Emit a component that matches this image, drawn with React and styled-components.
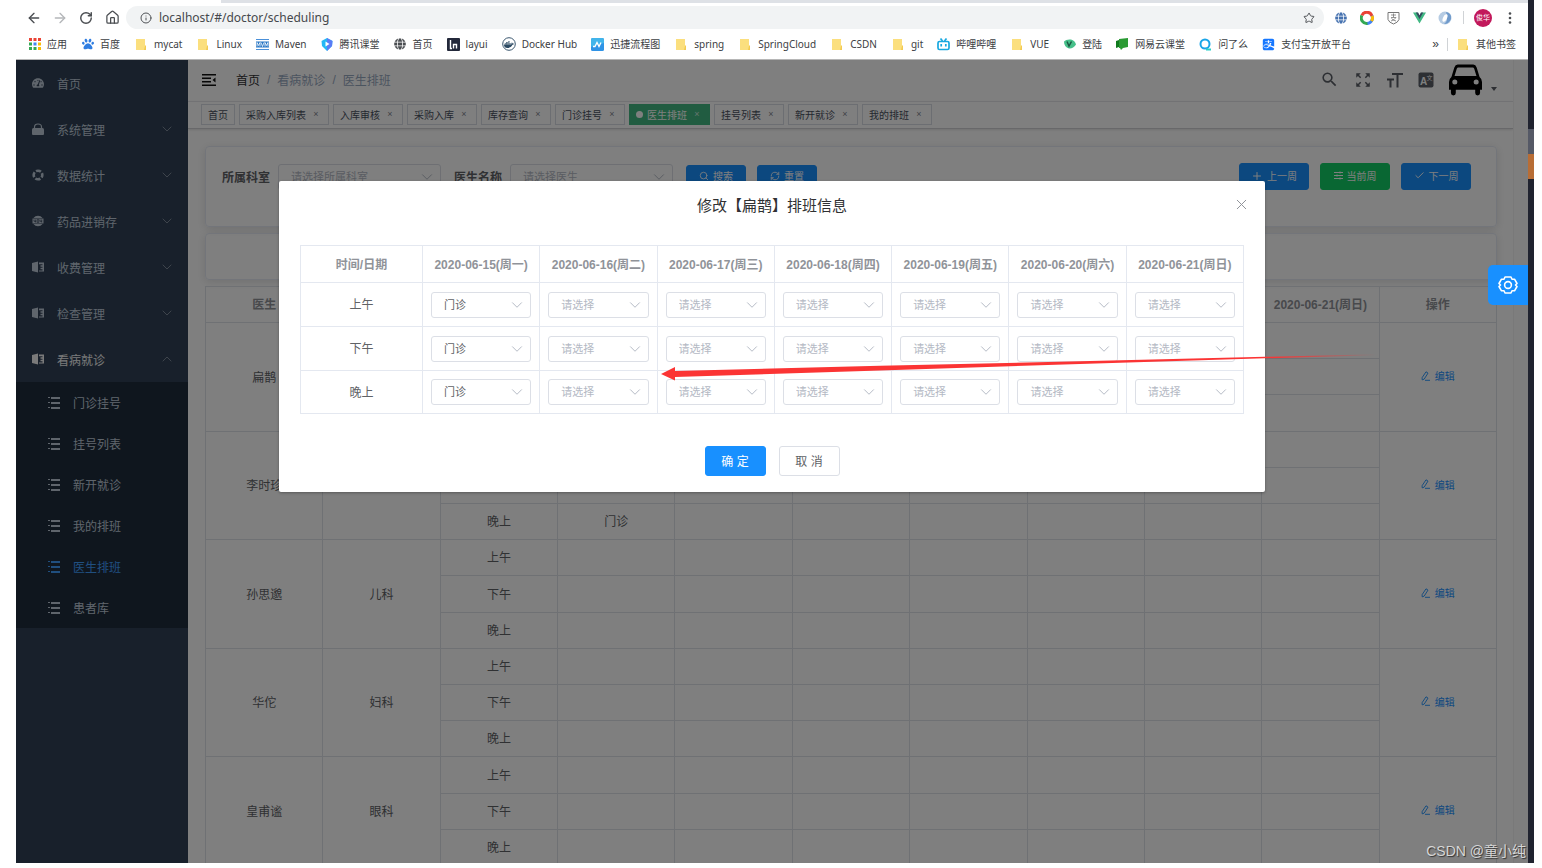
import React from 'react';
import styled, { createGlobalStyle } from 'styled-components';
import {
	FaLock,
	FaTachometerAlt,
	FaPaw,
	FaDocker,
	FaAlipay,
	FaGlobe,
} from 'react-icons/fa';
import { MdSearch, MdZoomOutMap } from 'react-icons/md';
import {
	ArrowLeft,
	ArrowRight,
	Check,
	ChevronDown,
	ChevronUp,
	House,
	Info,
	Plus,
	RefreshCw,
	RotateCw,
	Search,
	Star,
	X,
} from 'lucide-react';

const GlobalStyle = createGlobalStyle`
	* {
		box-sizing: border-box;
	}
	body {
		margin: 0;
		background: #fff;
		font-family: 'Liberation Sans', 'Noto Sans CJK SC', sans-serif;
		font-size: 12px;
	}
	button, select, input {
		font-family: inherit;
	}
	svg {
		display: block;
		flex: none;
	}
`;

const Page = styled.div`
	display: flex;
	height: 100vh;
	padding: 0 8px 5px 16px;
	overflow: hidden;
`;

const Browser = styled.div`
	position: relative;
	display: flex;
	flex: 1;
	flex-direction: column;
	min-width: 0;
`;

const Edge = styled.div`
	display: flex;
	flex-direction: column;
	width: 6px;
	padding-top: 129px;
	background: #20232f;
`;

const EdgeBlock = styled.div`
	height: 25px;
	background: ${props => props.color};
`;

/* ---------- browser bars ---------- */

const TabStrip = styled.div`
	height: 3px;
	background: #dee1e6;
`;

const ActiveTab = styled.div`
	width: 205px;
	height: 3px;
	background: #fff;
`;

const AddressRow = styled.div`
	display: flex;
	align-items: center;
	height: 29px;
	padding: 0 5px;
	color: #4f5256;
`;

const NavButton = styled.button`
	display: flex;
	justify-content: center;
	width: 26px;
	padding: 0;
	border: 0;
	background: none;
	color: ${props => (props.$dim ? '#b4b6b9' : '#4a4d51')};
`;

const AddressBar = styled.label`
	display: flex;
	flex: 1;
	align-items: center;
	gap: 7px;
	height: 23px;
	margin: 0 4px 0 1px;
	padding: 0 9px 0 14px;
	border-radius: 12px;
	background: #f1f3f4;
`;

const AddressInput = styled.input`
	flex: 1;
	padding: 0;
	border: 0;
	outline: 0;
	background: none;
	color: #45484c;
	font-family: 'Noto Sans', sans-serif;
	font-size: 12px;
`;

const Extension = styled.div`
	display: flex;
	justify-content: center;
	width: 26px;
`;

const BarDivider = styled.div`
	width: 1px;
	height: 13px;
	margin: 0 5px;
	background: #d0d3d6;
`;

const Avatar = styled.div`
	width: 18px;
	height: 18px;
	margin: 0 5px;
	border-radius: 50%;
	background: #c2185b;
	color: #fff;
	font-size: 7px;
	line-height: 18px;
	text-align: center;
`;

const Bookmarks = styled.nav`
	display: flex;
	align-items: center;
	gap: 14px;
	height: 28px;
	padding: 0 12px 3px;
	border-bottom: 1px solid #b6b6b6;
`;

const Bookmark = styled.a`
	display: flex;
	align-items: center;
	gap: 6px;
	color: #3c4043;
	font-family: 'Noto Sans', 'Noto Sans CJK SC', sans-serif;
	font-size: 10px;
	line-height: 14px;
	text-decoration: none;
	white-space: nowrap;
`;

const IconSlot = styled.span`
	display: flex;
	justify-content: center;
	min-width: 13px;
`;

const BookmarkEnd = styled.div`
	display: flex;
	align-items: center;
	gap: 3px;
	margin-left: auto;
	color: #3c4043;
`;

/* ---------- admin shell ---------- */

const Shell = styled.div`
	display: flex;
	flex: 1;
	min-height: 0;
	overflow: hidden;
`;

const Sidebar = styled.aside`
	width: 172px;
	background: #304156;
`;

const MenuItem = styled.a`
	display: flex;
	align-items: center;
	gap: 13px;
	height: 46px;
	padding: 0 13px 0 16px;
	color: ${props => (props.$open ? '#f4f4f5' : '#bfcbd9')};
	font-size: 12px;
	text-decoration: none;

	span {
		flex: 1;
	}
`;

const Chevron = styled.i`
	color: #8a94a2;
`;

const SubMenu = styled.div`
	background: #1f2d3d;
`;

const SubItem = styled.a`
	display: flex;
	align-items: center;
	gap: 13px;
	height: 41px;
	padding-left: 32px;
	color: ${props => (props.$active ? '#409eff' : '#bfcbd9')};
	font-size: 12px;
	text-decoration: none;
`;

const Main = styled.main`
	flex: 1;
	min-width: 0;
	background: #fff;
`;

const Gutter = styled.div`
	width: 15px;
	border-left: 1px solid #f2f2f2;
	background: #fcfcfc;
`;

const Navbar = styled.header`
	display: flex;
	align-items: center;
	height: 41px;
	padding: 0 16px 2px 14px;
	color: #5a5e66;
`;

const Breadcrumb = styled.div`
	display: flex;
	align-items: center;
	gap: 7px;
	margin-left: 20px;
	color: #97a8be;
	font-size: 12px;

	a {
		color: #303133;
		text-decoration: none;
	}
`;

const NavIcons = styled.div`
	display: flex;
	align-items: center;
	gap: 15px;
	margin-left: auto;
`;

const CarMenu = styled.div`
	display: flex;
	align-items: flex-end;
	gap: 9px;
	color: #000;
`;

const Caret = styled.i`
	margin-bottom: 5px;
	border: 3px solid transparent;
	border-top: 4px solid #5a5e66;
	border-bottom: 0;
`;

const Tags = styled.div`
	display: flex;
	align-items: center;
	gap: 4px;
	height: 28px;
	padding: 0 13px 1px;
	border-top: 1px solid #e4e4e8;
	border-bottom: 1px solid #d0d0d4;
	box-shadow: 0 1px 2px rgba(0, 0, 0, 0.12);
`;

const Tag = styled.a`
	display: flex;
	align-items: center;
	gap: 4px;
	height: 21px;
	padding: 0 6px 1px;
	border: 1px solid ${props => (props.$active ? '#42b983' : '#d8dce5')};
	background: ${props => (props.$active ? '#42b983' : '#fff')};
	color: ${props => (props.$active ? '#fff' : '#495060')};
	font-size: 10px;
	text-decoration: none;
	white-space: nowrap;
`;

const Dot = styled.i`
	width: 7px;
	height: 7px;
	border-radius: 50%;
	background: #fff;
`;

const TagClose = styled.i`
	width: 12px;
	font-size: 9px;
	font-style: normal;
	text-align: center;
	opacity: 0.7;
`;

const Content = styled.div`
	display: flex;
	flex-direction: column;
	gap: 6px;
	padding: 17px 16px 0 17px;
`;

const Card = styled.section`
	height: ${props => props.$height}px;
	border: 1px solid #e6ebf5;
	border-radius: 4px;
	box-shadow: 0 2px 10px rgba(0, 0, 0, 0.12);
`;

const FilterRow = styled.form`
	display: flex;
	align-items: center;
	height: 27px;
	margin: 16px 25px 0 16px;
`;

const Field = styled.label`
	display: flex;
	align-items: center;
	gap: 8px;
	margin-right: 13px;
	color: #606266;
	font-size: 12px;
	font-weight: bold;
`;

const SelectBox = styled.span`
	position: relative;
	display: block;
	width: ${props => props.$width};

	svg {
		position: absolute;
		top: 4px;
		right: 5px;
		color: #b4b9c4;
		pointer-events: none;
	}
`;

const NativeSelect = styled.select`
	display: block;
	width: 100%;
	height: 26px;
	padding: 0 12px;
	border: 1px solid #dcdfe6;
	border-radius: 3px;
	appearance: none;
	background: #fff;
	color: ${props => (props.$empty ? '#b4b9c4' : '#606266')};
	font-size: 11px;
`;

const Button = styled.button`
	display: flex;
	align-items: center;
	justify-content: center;
	gap: 4px;
	width: ${props => props.$width}px;
	height: ${props => props.$height}px;
	padding: 0 0 2px;
	border: 1px solid ${props => props.$border || props.$color};
	border-radius: 3px;
	background: ${props => props.$color};
	color: ${props => props.$text || '#fff'};
	font-size: ${props => props.$size || 10}px;
	white-space: pre;
`;

const SearchButtons = styled.div`
	display: flex;
	gap: 11px;
`;

const WeekButtons = styled.div`
	display: flex;
	gap: 11px;
	margin-left: auto;
`;

const Grid = styled.table`
	width: 100%;
	border-collapse: collapse;
	table-layout: fixed;
	color: #606266;
	font-size: 12px;
	text-align: center;

	th,
	td {
		padding: 0 0 2px;
		border: 1px solid #dfe2e8;
	}
	th {
		height: 36px;
		color: #909399;
		white-space: nowrap;
	}
	td {
		height: 36px;
	}
	tbody tr:nth-child(5n + 3) td {
		height: 37px;
	}
`;

const EditButton = styled.button`
	display: inline-flex;
	align-items: center;
	gap: 5px;
	padding: 0;
	border: 0;
	background: none;
	color: #1890ff;
	font-size: 10px;
`;

/* ---------- dialog ---------- */

const Mask = styled.div`
	position: absolute;
	inset: 60px 0 0;
	background: rgba(0, 0, 0, 0.5);
`;

const Dialog = styled.div`
	position: relative;
	margin: 121px 263px 0;
	padding-bottom: 16px;
	border-radius: 2px;
	background: #fff;
	box-shadow: 0 1px 3px rgba(0, 0, 0, 0.3);
`;

const DialogHead = styled.div`
	display: grid;
	grid-template-columns: 1fr auto 1fr;
	align-items: start;
	height: 64px;
	padding: 15px 15px 0;
`;

const DialogTitle = styled.h2`
	grid-column: 2;
	margin: 0;
	color: #303133;
	font-size: 15px;
	font-weight: normal;
	line-height: 20px;
`;

const CloseButton = styled.button`
	justify-self: end;
	padding: 0;
	border: 0;
	background: none;
	color: #909399;
`;

const DialogBody = styled.div`
	padding: 0 21px;
`;

const ShiftTable = styled.table`
	width: 100%;
	border-collapse: collapse;
	table-layout: fixed;
	color: #606266;
	font-size: 12px;
	text-align: center;

	th,
	td {
		height: 44px;
		padding: 0 8px;
		border: 1px solid #e4e8f0;
	}
	th {
		height: 37px;
		padding: 0 0 2px;
		color: #909399;
		white-space: nowrap;
	}
	td:first-child {
		padding-bottom: 2px;
	}
	tr:last-child td {
		height: 43px;
	}
	th:first-child {
		width: 122px;
	}
`;

const DialogFoot = styled.div`
	display: flex;
	justify-content: center;
	gap: 13px;
	margin-top: 32px;
`;

const Arrow = styled.svg`
	position: absolute;
	top: 170px;
	left: 382px;
	pointer-events: none;
`;

const SettingsButton = styled.button`
	position: absolute;
	top: 265px;
	right: 0;
	display: flex;
	align-items: center;
	justify-content: center;
	width: 40px;
	height: 40px;
	padding: 0;
	border: 0;
	border-radius: 5px 0 0 5px;
	background: #1890ff;
	color: #fff;
`;

const Watermark = styled.div`
	position: absolute;
	right: 2px;
	bottom: 2px;
	color: #d6d6d6;
	font-size: 14px;
	line-height: 20px;
	text-shadow: 1px 1px 1px #333;
`;

/* ---------- icons ---------- */

const FolderIcon = () => (
	<svg width="14" height="13" viewBox="0 0 14 13">
		<path d="M2 1h9v11H2z" fill="#fbdf7e" />
		<path d="M11 8l1-1v5h-2z" fill="#f3cb52" />
	</svg>
);

const AppsIcon = () => (
	<svg width="12" height="12" viewBox="0 0 12 12">
		{['#ea4335', '#ea4335', '#ea4335', '#34a853', '#4285f4', '#fbbc05', '#34a853', '#34a853', '#fbbc05'].map(
			(color, i) => (
				<rect
					key={i}
					x={(i % 3) * 4.5}
					y={Math.floor(i / 3) * 4.5}
					width="3"
					height="3"
					fill={color}
				/>
			)
		)}
	</svg>
);

const MavenIcon = () => (
	<svg width="13" height="13" viewBox="0 0 13 13">
		<path d="M0 1h13v1H0zM0 11h13v1H0z" fill="#4a90d9" />
		<path d="M0 3.500h13v6H0z" fill="#2b78c5" />
		<path d="M1 8.500v-4l1.500 3 1.500-3v4M5 4.500l1.500 4 1.500-4M9 8.500v-4l1.500 3 1.500-3v4" fill="none" stroke="#fff" strokeWidth=".8" />
	</svg>
);

const ClassIcon = () => (
	<svg width="12" height="13" viewBox="0 0 12 13">
		<path d="M6 0l5.500 3-.5 5-5 5-5-5L.5 3z" fill="#23b8f5" />
		<path d="M6 0l5.500 3-.5 5-5 5z" fill="#5a7cf5" />
		<path d="M4.500 3.500l4 2.500-4 2.500z" fill="#fff" />
	</svg>
);

const LayuiIcon = () => (
	<svg width="13" height="13" viewBox="0 0 13 13">
		<rect width="13" height="13" rx="1" fill="#23283a" />
		<path d="M3.500 2v8.500h1.500M6.500 10.500v-4h3v4" fill="none" stroke="#fff" strokeWidth="1.400" />
	</svg>
);

const DockerIcon = () => (
	<svg width="14" height="14" viewBox="0 0 14 14">
		<circle cx="7" cy="7" r="6.300" fill="#fff" stroke="#3a566e" />
		<g transform="translate(2 2.500)">
			<FaDocker size={10} color="#2c4a63" />
		</g>
	</svg>
);

const FlowIcon = () => (
	<svg width="13" height="13" viewBox="0 0 13 13">
		<rect width="13" height="13" rx="1.500" fill="#2f93e6" />
		<path d="M0 1.500A1.500 1.500 0 0 1 1.500 0h10A1.500 1.500 0 0 1 13 1.500V5L0 9z" fill="#41b4ea" />
		<path d="M2 8.500h2l2-4 2 4 2-4" fill="none" stroke="#fff" strokeWidth="1.300" />
	</svg>
);

const BiliIcon = () => (
	<svg width="13" height="13" viewBox="0 0 13 13" fill="none" stroke="#18a8e0" strokeWidth="1.700">
		<rect x="1" y="3.500" width="11" height="8" rx="1.500" />
		<path d="M3.500 .5l2 2.500M9.500 .5l-2 2.500M4.200 6v2.500M8.800 6v2.500" />
	</svg>
);

const LoginIcon = () => (
	<svg width="12" height="12" viewBox="0 0 12 12">
		<path d="M0 3.500Q2 1 7 1.500q4 1 5 5Q9 11 5 10.500 0 9 0 3.500z" fill="#46c08a" />
		<path d="M3 3.500l2 4.500 2.500-4.500" fill="none" stroke="#1d5a44" strokeWidth="1.500" />
	</svg>
);

const NetEaseIcon = () => (
	<svg width="13" height="12" viewBox="0 0 13 12">
		<path d="M3 1l9-1v9l-5 1-2 2-1-2H3z" fill="#2a9a33" />
		<path d="M0 3l3-1v7l-3 1z" fill="#107a1d" />
	</svg>
);

const AskIcon = () => (
	<svg width="13" height="13" viewBox="0 0 13 13" fill="none" strokeWidth="2">
		<circle cx="6" cy="6" r="4.500" stroke="#19a5e8" />
		<path d="M7 11.500h5" stroke="#28d0c8" />
	</svg>
);

const ChromeRing = () => (
	<svg width="14" height="14" viewBox="0 0 14 14" fill="none" strokeWidth="3">
		<path d="M1.900 4.500A5.400 5.400 0 0 1 12 5" stroke="#ea4335" />
		<path d="M12 4.800A5.400 5.400 0 0 1 7 12.400" stroke="#4285f4" />
		<path d="M12.100 5A5.400 5.400 0 0 1 11.500 10" stroke="#fbbc05" />
		<path d="M7.500 12.400A5.400 5.400 0 0 1 1.900 4.500" stroke="#34a853" />
	</svg>
);

const ShieldIcon = () => (
	<svg width="13" height="14" viewBox="0 0 13 14" fill="none" stroke="#777">
		<path d="M1 1.500h11v7q-1 3-5.500 4.500Q2 11.500 1 8.500z" />
		<path d="M4 4h5M6.500 2.500V6M4 6.500h5Q7.500 9 4 10M4.500 7.500q2 2 4.500 2.500" strokeWidth=".8" />
	</svg>
);

const VueIcon = () => (
	<svg width="13" height="12" viewBox="0 0 14 12">
		<path d="M0 0h5l2 4 2-4h5L7 12z" fill="#41b883" />
		<path d="M3 0h2.500L7 3l1.500-3H11L7 7z" fill="#35495e" />
	</svg>
);

const SwirlIcon = () => (
	<svg width="14" height="14" viewBox="0 0 14 14">
		<circle cx="7" cy="7" r="6.500" fill="#b5cbe3" />
		<path d="M8 1q6 1 5 7-2 5-7 5 5-3 2-12z" fill="#6f9acb" />
		<ellipse cx="7" cy="7" rx="2" ry="4" fill="#fff" transform="rotate(25 7 7)" />
	</svg>
);

const DotsIcon = () => (
	<svg width="4" height="12" viewBox="0 0 4 12" fill="#4a4d51">
		<circle cx="2" cy="1.500" r="1.300" />
		<circle cx="2" cy="6" r="1.300" />
		<circle cx="2" cy="10.500" r="1.300" />
	</svg>
);

const LockIcon = () => (
	<svg width="12" height="12" viewBox="0 0 12 12">
		<path d="M0 6.500Q0 5 1.500 5h9Q12 5 12 6.500V11q0 1-1 1H1q-1 0-1-1z" fill="currentColor" />
		<path d="M2.500 6V4q0-3 3.500-3t3.500 3v2" fill="none" stroke="currentColor" strokeWidth="1.200" />
	</svg>
);

const RingIcon = () => (
	<svg width="12" height="12" viewBox="0 0 12 12" fill="none" stroke="currentColor">
		<circle cx="6" cy="6" r="4.300" strokeWidth="2.600" strokeDasharray="5.200 1.550" strokeDashoffset="2.600" />
	</svg>
);

const NotFoundIcon = () => (
	<svg width="12" height="12" viewBox="0 0 12 12">
		<path d="M1.500 3a5.500 5.500 0 0 1 9 0zM1.500 9a5.500 5.500 0 0 0 9 0z" fill="currentColor" />
		<path d="M.5 3.500h11v5H.5z" fill="currentColor" />
		<path d="M2 4.500v1.800h2M3.700 4.500v3M5.200 4.600h1.600v2.800H5.200zM8 4.500v1.800h2M9.700 4.500v3" stroke="#304156" strokeWidth=".7" fill="none" />
	</svg>
);

const BookIcon = () => (
	<svg width="12" height="12" viewBox="0 0 12 12">
		<path d="M0 2l6-1.500v11L0 10z" fill="currentColor" />
		<path d="M7 1.500h5v9H7V9.400h3.500V8.300H8.500V6.800h2V5.800h-2V4.300h2V3.200H7z" fill="currentColor" />
	</svg>
);

const ListIcon = () => (
	<svg width="12" height="12" viewBox="0 0 12 12" fill="currentColor">
		<path d="M3 0h9v2H3zM3 5h9v2H3zM3 10h9v2H3zM0 0h2v1H0zM0 5h2v1H0zM0 10h2v1H0z" />
	</svg>
);

const FoldIcon = () => (
	<svg width="14" height="12" viewBox="0 0 14 12" fill="#111">
		<path d="M0 0h14v1.500H0zM0 3.500h9V5H0zM0 7h9v1.500H0zM0 10.500h14V12H0zM13.500 3.500v5L10.500 6z" />
	</svg>
);

const FontSizeIcon = () => (
	<svg width="16" height="16" viewBox="0 0 16 16" fill="currentColor">
		<path d="M5 1h11v2h-4.500v12.500h-2V3H5zM0 6.500h7v2H4.500v7h-2v-7H0z" />
	</svg>
);

const LangIcon = () => (
	<svg width="16" height="16" viewBox="0 0 16 16">
		<rect x=".5" y=".5" width="15" height="15" rx="2" fill="#5a5e66" />
		<text x="2" y="12.500" fontSize="10" fontWeight="bold" fill="#fff">A</text>
		<text x="8.500" y="7.500" fontSize="6" fill="#fff">文</text>
	</svg>
);

const CarIcon = () => (
	<svg width="33" height="32" viewBox="0 0 34 32">
		<path
			fillRule="evenodd"
			d="M9 0h16q2.500 0 3.500 3l3 10Q34 15 34 18v8h-2v3.500q0 2.500-2.500 2.500T27 29.500V26H7v3.500Q7 32 4.500 32T2 29.500V26H0v-8q0-3 2.500-5l3-10Q6.500 0 9 0zM9.500 3Q8.500 3 8 4.500L5.700 12h22.600L26 4.500Q25.500 3 24.500 3zM6 15.500a2.600 2.600 0 1 0 0 5.200 2.600 2.600 0 0 0 0-5.200zM28 15.500a2.600 2.600 0 1 0 0 5.200 2.600 2.600 0 0 0 0-5.200z"
		/>
	</svg>
);

const SlidersIcon = () => (
	<svg width="9" height="9" viewBox="0 0 9 9" fill="none" stroke="currentColor">
		<path d="M0 1.500h9M0 4.500h9M0 7.500h9M6 .5v2M3 3.500v2M6 6.500v2" />
	</svg>
);

const EditIcon = () => (
	<svg width="9" height="10" viewBox="0 0 9 10" fill="none" stroke="currentColor" strokeWidth=".9">
		<path d="M5 .8l2 1.300-3.800 6-2 .8-.1-2.200zM4 9.300h5" />
	</svg>
);

const GearIcon = () => (
	<svg width="20" height="20" viewBox="0 0 20 20" fill="none" stroke="currentColor" strokeWidth="1.600" strokeLinejoin="round">
		<path d="M7 2h6l1 2.300 2.500-.1 2.500 4.300L17.500 10l1.500 1.500-2.500 4.300-2.500-.1L13 18H7l-1-2.300-2.500.1L1 11.500 2.500 10 1 8.500l2.500-4.300 2.500.1z" />
		<circle cx="10" cy="10" r="3.400" />
	</svg>
);

/* ---------- data ---------- */

const bookmarks = [
	['应用', <AppsIcon />],
	['百度', <FaPaw size={12} color="#2f7de1" />],
	['mycat', <FolderIcon />],
	['Linux', <FolderIcon />],
	['Maven', <MavenIcon />],
	['腾讯课堂', <ClassIcon />],
	['首页', <FaGlobe size={12} color="#4a4d51" />],
	['layui', <LayuiIcon />],
	['Docker Hub', <DockerIcon />],
	['迅捷流程图', <FlowIcon />],
	['spring', <FolderIcon />],
	['SpringCloud', <FolderIcon />],
	['CSDN', <FolderIcon />],
	['git', <FolderIcon />],
	['哔哩哔哩', <BiliIcon />],
	['VUE', <FolderIcon />],
	['登陆', <LoginIcon />],
	['网易云课堂', <NetEaseIcon />],
	['问了么', <AskIcon />],
	['支付宝开放平台', <FaAlipay size={13} color="#1677ff" />],
];

const menu = [
	['系统管理', <LockIcon />],
	['数据统计', <RingIcon />],
	['药品进销存', <NotFoundIcon />],
	['收费管理', <BookIcon />],
	['检查管理', <BookIcon />],
];

const subMenu = ['门诊挂号', '挂号列表', '新开就诊', '我的排班', '医生排班', '患者库'];

const tags = [
	'首页',
	'采购入库列表',
	'入库审核',
	'采购入库',
	'库存查询',
	'门诊挂号',
	'医生排班',
	'挂号列表',
	'新开就诊',
	'我的排班',
];

const days = [
	'2020-06-15(周一)',
	'2020-06-16(周二)',
	'2020-06-17(周三)',
	'2020-06-18(周四)',
	'2020-06-19(周五)',
	'2020-06-20(周六)',
	'2020-06-21(周日)',
];

const periods = ['上午', '下午', '晚上'];

const doctors = [
	{ name: '扁鹊', dept: '内科', monday: '门诊' },
	{ name: '李时珍', dept: '内科', monday: '门诊' },
	{ name: '孙思邈', dept: '儿科', monday: '' },
	{ name: '华佗', dept: '妇科', monday: '' },
	{ name: '皇甫谧', dept: '眼科', monday: '' },
];

const Select = ({ width = '100%', placeholder = '请选择', value, label }) => (
	<SelectBox $width={width}>
		<NativeSelect $empty={!value} defaultValue={value || ''} aria-label={label}>
			<option value="">{placeholder}</option>
			<option value="门诊">门诊</option>
		</NativeSelect>
		<ChevronDown size={18} strokeWidth={1.3} />
	</SelectBox>
);

const BrowserBars = () => (
	<>
		<TabStrip>
			<ActiveTab />
		</TabStrip>
		<AddressRow>
			<NavButton aria-label="后退">
				<ArrowLeft size={16} />
			</NavButton>
			<NavButton $dim aria-label="前进">
				<ArrowRight size={16} />
			</NavButton>
			<NavButton aria-label="刷新">
				<RotateCw size={14} strokeWidth={2.5} />
			</NavButton>
			<NavButton aria-label="主页">
				<House size={15} />
			</NavButton>
			<AddressBar>
				<Info size={12} />
				<AddressInput
					aria-label="地址"
					defaultValue="localhost/#/doctor/scheduling"
				/>
				<Star size={12} />
			</AddressBar>
			<Extension>
				<FaGlobe size={12} color="#4672b0" />
			</Extension>
			<Extension>
				<ChromeRing />
			</Extension>
			<Extension>
				<ShieldIcon />
			</Extension>
			<Extension>
				<VueIcon />
			</Extension>
			<Extension>
				<SwirlIcon />
			</Extension>
			<BarDivider />
			<Avatar>俊华</Avatar>
			<NavButton aria-label="菜单">
				<DotsIcon />
			</NavButton>
		</AddressRow>
		<Bookmarks>
			{bookmarks.map(([name, icon]) => (
				<Bookmark href="#" key={name}>
					<IconSlot>{icon}</IconSlot>
					{name}
				</Bookmark>
			))}
			<BookmarkEnd>
				»
				<BarDivider />
				<Bookmark href="#">
					<IconSlot>
						<FolderIcon />
					</IconSlot>
					其他书签
				</Bookmark>
			</BookmarkEnd>
		</Bookmarks>
	</>
);

const SideMenu = () => (
	<Sidebar>
		<MenuItem href="#">
			<FaTachometerAlt size={12} />
			<span>首页</span>
		</MenuItem>
		{menu.map(([name, icon]) => (
			<MenuItem href="#" key={name}>
				{icon}
				<span>{name}</span>
				<Chevron>
					<ChevronDown size={16} strokeWidth={1.3} />
				</Chevron>
			</MenuItem>
		))}
		<MenuItem href="#" $open>
			<BookIcon />
			<span>看病就诊</span>
			<Chevron>
				<ChevronUp size={16} strokeWidth={1.3} />
			</Chevron>
		</MenuItem>
		<SubMenu>
			{subMenu.map(name => (
				<SubItem href="#" key={name} $active={name === '医生排班'}>
					<ListIcon />
					{name}
				</SubItem>
			))}
		</SubMenu>
	</Sidebar>
);

const TopBar = () => (
	<>
		<Navbar>
			<FoldIcon />
			<Breadcrumb>
				<a href="#">首页</a>
				<span>/</span>
				<span>看病就诊</span>
				<span>/</span>
				<span>医生排班</span>
			</Breadcrumb>
			<NavIcons>
				<MdSearch size={19} />
				<MdZoomOutMap size={18} />
				<FontSizeIcon />
				<LangIcon />
				<CarMenu>
					<CarIcon />
					<Caret />
				</CarMenu>
			</NavIcons>
		</Navbar>
		<Tags>
			{tags.map((name, i) => {
				const active = name === '医生排班';
				return (
					<Tag href="#" key={name} $active={active}>
						{active && <Dot />}
						{name}
						{i > 0 && <TagClose>×</TagClose>}
					</Tag>
				);
			})}
		</Tags>
	</>
);

const Filters = () => (
	<Card $height={81}>
		<FilterRow>
			<Field>
				所属科室
				<Select width="163px" placeholder="请选择所属科室" />
			</Field>
			<Field>
				医生名称
				<Select width="163px" placeholder="请选择医生" />
			</Field>
			<SearchButtons>
				<Button type="button" $width={60} $height={23} $color="#1890ff">
					<Search size={10} />
					搜索
				</Button>
				<Button type="button" $width={60} $height={23} $color="#1890ff">
					<RefreshCw size={10} />
					重置
				</Button>
			</SearchButtons>
			<WeekButtons>
				<Button type="button" $width={70} $height={27} $color="#1890ff">
					<Plus size={12} />
					上一周
				</Button>
				<Button type="button" $width={70} $height={27} $color="#13ce66">
					<SlidersIcon />
					当前周
				</Button>
				<Button type="button" $width={70} $height={27} $color="#1890ff">
					<Check size={11} />
					下一周
				</Button>
			</WeekButtons>
		</FilterRow>
	</Card>
);

const Schedule = () => (
	<Grid>
		<thead>
			<tr>
				<th>医生</th>
				<th>科室</th>
				<th>时间/日期</th>
				{days.map(day => (
					<th key={day}>{day}</th>
				))}
				<th>操作</th>
			</tr>
		</thead>
		<tbody>
			{doctors.map(doctor =>
				periods.map((period, i) => (
					<tr key={doctor.name + period}>
						{i === 0 && <td rowSpan={3}>{doctor.name}</td>}
						{i === 0 && <td rowSpan={3}>{doctor.dept}</td>}
						<td>{period}</td>
						{days.map((day, d) => (
							<td key={day}>{d === 0 ? doctor.monday : ''}</td>
						))}
						{i === 0 && (
							<td rowSpan={3}>
								<EditButton>
									<EditIcon />
									编辑
								</EditButton>
							</td>
						)}
					</tr>
				))
			)}
		</tbody>
	</Grid>
);

const EditDialog = () => (
	<Dialog role="dialog" aria-labelledby="dialog-title">
		<DialogHead>
			<DialogTitle id="dialog-title">修改【扁鹊】排班信息</DialogTitle>
			<CloseButton aria-label="关闭">
				<X size={17} strokeWidth={1.4} />
			</CloseButton>
		</DialogHead>
		<DialogBody>
			<ShiftTable>
				<thead>
					<tr>
						<th>时间/日期</th>
						{days.map(day => (
							<th key={day}>{day}</th>
						))}
					</tr>
				</thead>
				<tbody>
					{periods.map(period => (
						<tr key={period}>
							<td>{period}</td>
							{days.map((day, d) => (
								<td key={day}>
									<Select
										value={d === 0 ? '门诊' : ''}
										label={`${day} ${period}`}
									/>
								</td>
							))}
						</tr>
					))}
				</tbody>
			</ShiftTable>
		</DialogBody>
		<DialogFoot>
			<Button $width={61} $height={30} $color="#1890ff" $size={12}>
				确 定
			</Button>
			<Button
				$width={61}
				$height={30}
				$color="#fff"
				$border="#dcdfe6"
				$text="#606266"
				$size={12}
			>
				取 消
			</Button>
		</DialogFoot>
		<Arrow width="720" height="32" viewBox="0 0 720 32">
			<defs>
				<linearGradient id="fade">
					<stop offset="0.85" stopColor="#fb3434" />
					<stop offset="1" stopColor="#fb3434" stopOpacity="0" />
				</linearGradient>
			</defs>
			<path
				d="M0 23L14 16V20L219 14.700 419 10.300 604 5.800 715 3.200V4.200L604 7.300 419 12.900 219 19.500 14 26V29.500z"
				fill="url(#fade)"
			/>
		</Arrow>
	</Dialog>
);

const App = () => (
	<Page>
		<GlobalStyle />
		<Browser>
			<BrowserBars />
			<Shell>
				<SideMenu />
				<Main>
					<TopBar />
					<Content>
						<Filters />
						<Card $height={47} />
						<Schedule />
					</Content>
				</Main>
				<Gutter />
			</Shell>
			<Mask>
				<EditDialog />
			</Mask>
			<SettingsButton aria-label="设置">
				<GearIcon />
			</SettingsButton>
			<Watermark>CSDN @童小纯</Watermark>
		</Browser>
		<Edge>
			<EdgeBlock color="#555966" />
			<EdgeBlock color="#b86d35" />
		</Edge>
	</Page>
);

export default App;
